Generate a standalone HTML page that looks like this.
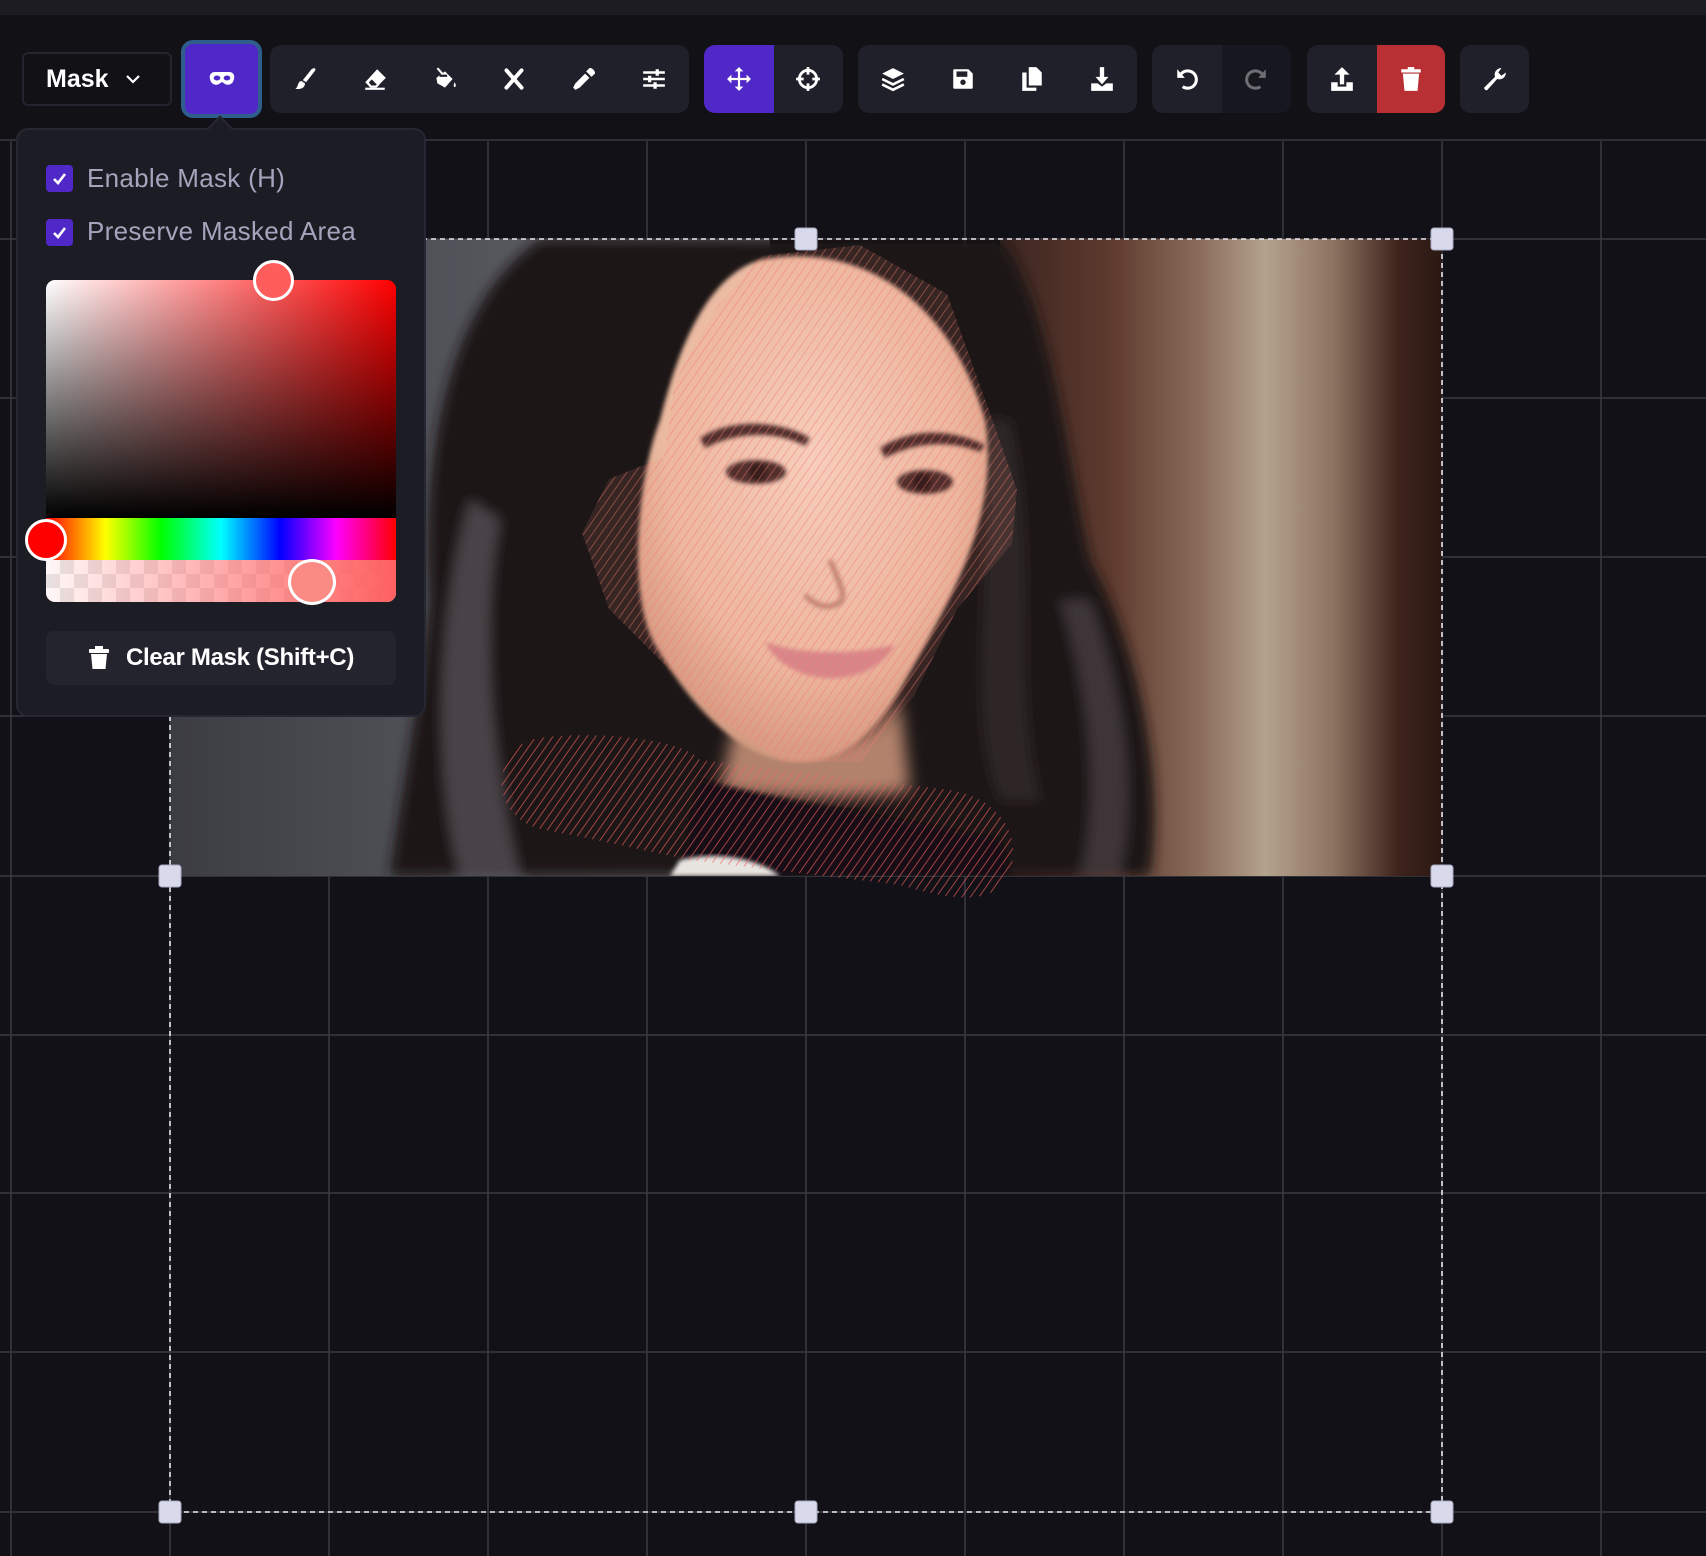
<!DOCTYPE html>
<html><head><meta charset="utf-8"><style>
*{box-sizing:border-box;margin:0;padding:0}
body{width:1706px;height:1556px;background:#111117;overflow:hidden;position:relative;font-family:"Liberation Sans",sans-serif}
.abs{position:absolute}
.grp{position:absolute;top:45px;height:68px;background:#1f2029;border-radius:11px;overflow:hidden;display:flex}
.btn{width:70px;height:68px;display:flex;align-items:center;justify-content:center}
.btn svg{width:26px;height:26px}
</style></head><body>
<svg class="abs" style="left:0;top:0" width="1706" height="1556" viewBox="0 0 1706 1556">
<defs>
<pattern id="hatch" patternUnits="userSpaceOnUse" width="7" height="7" patternTransform="rotate(35)">
<line x1="0" y1="0" x2="0" y2="7" stroke="rgba(238,95,95,0.8)" stroke-width="1.6"/>
</pattern>
<pattern id="hatch2" patternUnits="userSpaceOnUse" width="7" height="7" patternTransform="rotate(35)">
<line x1="0" y1="0" x2="0" y2="7" stroke="rgba(240,120,110,0.6)" stroke-width="1.5"/>
</pattern>
<linearGradient id="lg" x1="0" x2="1"><stop offset="0" stop-color="#3c3d43"/><stop offset="1" stop-color="#6b6c73"/></linearGradient>
<linearGradient id="rg" x1="0" x2="1">
<stop offset="0" stop-color="#3a2520"/><stop offset="0.25" stop-color="#5e3a2e"/><stop offset="0.45" stop-color="#8a6c5a"/><stop offset="0.6" stop-color="#b3a28c"/><stop offset="0.75" stop-color="#8f7563"/><stop offset="0.9" stop-color="#3e241c"/><stop offset="1" stop-color="#2a1812"/></linearGradient>
<radialGradient id="skin" cx="0.5" cy="0.4" r="0.6"><stop offset="0" stop-color="#f6d6c4"/><stop offset="0.7" stop-color="#ebbba2"/><stop offset="1" stop-color="#d29a80"/></radialGradient>
<filter id="bl"><feGaussianBlur stdDeviation="6"/></filter>
<filter id="bl2"><feGaussianBlur stdDeviation="2"/></filter>
<filter id="bl3"><feGaussianBlur stdDeviation="8"/></filter>
<clipPath id="ic"><rect x="170" y="239" width="1272" height="637"/></clipPath>
</defs>
<rect x="0" y="0" width="1706" height="15" fill="#1c1c22"/>
<rect x="0" y="15" width="1706" height="125" fill="#111116"/>
<rect x="0" y="139" width="1706" height="2" fill="#2e2e38"/>
<rect x="0" y="141" width="1706" height="1415" fill="#111117"/>
<g stroke="#3a3a44" stroke-width="1.5">
<line x1="11" y1="141" x2="11" y2="1556"/><line x1="170" y1="141" x2="170" y2="1556"/><line x1="329" y1="141" x2="329" y2="1556"/><line x1="488" y1="141" x2="488" y2="1556"/><line x1="647" y1="141" x2="647" y2="1556"/><line x1="806" y1="141" x2="806" y2="1556"/><line x1="965" y1="141" x2="965" y2="1556"/><line x1="1124" y1="141" x2="1124" y2="1556"/><line x1="1283" y1="141" x2="1283" y2="1556"/><line x1="1442" y1="141" x2="1442" y2="1556"/><line x1="1601" y1="141" x2="1601" y2="1556"/>
<line x1="0" y1="239" x2="1706" y2="239"/><line x1="0" y1="398" x2="1706" y2="398"/><line x1="0" y1="557" x2="1706" y2="557"/><line x1="0" y1="716" x2="1706" y2="716"/><line x1="0" y1="876" x2="1706" y2="876"/><line x1="0" y1="1035" x2="1706" y2="1035"/><line x1="0" y1="1193" x2="1706" y2="1193"/><line x1="0" y1="1352" x2="1706" y2="1352"/><line x1="0" y1="1512" x2="1706" y2="1512"/>
</g>
<g clip-path="url(#ic)">
<rect x="170" y="239" width="600" height="637" fill="url(#lg)"/>
<rect x="1000" y="239" width="442" height="637" fill="url(#rg)"/>
<g filter="url(#bl)">
<path d="M540 239 C450 300 420 450 430 600 C420 700 400 800 390 876 L1150 876 C1165 780 1140 650 1090 560 C1065 450 1050 300 1000 239 Z" fill="#1b1617"/>
<path d="M470 500 C440 600 430 760 460 876 L520 876 C490 760 480 620 500 520Z" fill="#4a4246"/>
<path d="M1060 600 C1090 700 1100 800 1080 876 L1120 876 C1140 780 1120 680 1090 600Z" fill="#3e3638"/>
<path d="M980 420 C1000 560 960 700 1000 800 L1040 800 C1010 680 1040 560 1010 420Z" fill="#2d2527"/>
</g>
<path d="M740 700 C780 760 860 760 900 700 L910 790 C860 800 780 800 720 790 Z" fill="#b2826c" filter="url(#bl3)"/>
<path d="M760 260 C860 240 950 300 985 420 C1000 520 950 600 900 690 C870 740 840 762 800 762 C740 762 690 705 655 645 C625 590 640 470 660 420 C680 340 710 275 760 260 Z" fill="url(#skin)" filter="url(#bl2)"/>
<g filter="url(#bl2)">
<path d="M700 438 C730 418 780 420 810 438 L805 446 C780 432 740 430 705 448Z" fill="#3a2420"/>
<path d="M880 448 C910 428 950 428 985 445 L980 452 C950 440 915 442 885 458Z" fill="#3a2420"/>
<ellipse cx="756" cy="472" rx="30" ry="12" fill="#3a2420"/><circle cx="758" cy="472" r="9" fill="#1a0e0c"/>
<ellipse cx="925" cy="482" rx="28" ry="12" fill="#3a2420"/><circle cx="922" cy="482" r="9" fill="#1a0e0c"/>
<path d="M830 560 C840 585 850 600 835 605 C820 610 810 600 805 595" stroke="#b47f6a" stroke-width="5" fill="none"/>
<path d="M765 642 C800 655 850 655 895 645 C870 690 790 690 765 642Z" fill="#d4848a"/>
</g>
<path d="M700 780 C780 800 900 820 1000 840 L1010 876 L680 876 Z" fill="#151012" filter="url(#bl2)"/>
<path d="M680 860 C720 850 760 860 780 876 L670 876Z" fill="#e8e4e0" filter="url(#bl2)"/>
</g>
<g>
<path d="M762 256 L860 245 L947 294 L990 413 L1017 490 L1012 544 L957 609 L914 696 L860 762 L783 762 L718 718 L653 653 L609 609 L582 533 L609 479 L664 457 L675 381 L718 305 Z" fill="rgba(255,150,130,0.12)"/>
<path d="M762 256 L860 245 L947 294 L990 413 L1017 490 L1012 544 L957 609 L914 696 L860 762 L783 762 L718 718 L653 653 L609 609 L582 533 L609 479 L664 457 L675 381 L718 305 Z" fill="url(#hatch2)"/>
<path d="M530 740 C570 730 680 735 700 760 L950 790 C1010 800 1025 850 1005 880 C990 905 950 900 900 885 L690 860 C640 850 600 840 545 830 C490 820 490 755 530 740 Z" fill="url(#hatch)"/>
</g>
<rect x="170" y="239" width="1272" height="1273" fill="none" stroke="#e8e8f0" stroke-width="1.6" stroke-dasharray="5 4"/>
<g fill="#d8d9ea" stroke="#a9abc3" stroke-width="1">
<rect x="159" y="228" width="22" height="22" rx="3"/><rect x="795" y="228" width="22" height="22" rx="3"/><rect x="1431" y="228" width="22" height="22" rx="3"/>
<rect x="159" y="865" width="22" height="22" rx="3"/><rect x="1431" y="865" width="22" height="22" rx="3"/>
<rect x="159" y="1501" width="22" height="22" rx="3"/><rect x="795" y="1501" width="22" height="22" rx="3"/><rect x="1431" y="1501" width="22" height="22" rx="3"/>
</g>
</svg>

<div class="abs" style="left:22px;top:52px;width:150px;height:54px;border:2px solid #24242e;border-radius:6px;background:#111116;color:#fff;font-weight:bold;font-size:25px;display:flex;align-items:center;padding-left:22px">Mask<svg style="margin-left:16px" width="16" height="10" viewBox="0 0 16 10"><path d="M2 2 L8 8 L14 2" stroke="#fff" stroke-width="2.2" fill="none"/></svg></div>
<div class="abs" style="left:181px;top:40px;width:81px;height:78px;border:4px solid #2f5e8c;border-radius:12px;background:#5128c8;display:flex;align-items:center;justify-content:center">
<svg width="26" height="16" viewBox="0 0 26 16"><path d="M6 1 H20 C24 1 26 4 25 8 C24 13 20 15 16 13 L13 11 L10 13 C6 15 2 13 1 8 C0 4 2 1 6 1Z" fill="#fff"/><ellipse cx="8" cy="7" rx="3.3" ry="2.5" fill="#5128c8"/><ellipse cx="18" cy="7" rx="3.3" ry="2.5" fill="#5128c8"/></svg></div>

<div class="grp" style="left:270px;width:419px">
<div class="btn"><svg viewBox="0 0 24 24"><path d="M20 2 C21 2 22 3 21.5 4 L13 15 L10 13 L18 3Z" fill="#fff"/><path d="M9 14 L12 16 C12 20 8 22 3 21 C5 20 5 18 6 16 C7 14 8 14 9 14Z" fill="#fff"/></svg></div>
<div class="btn"><svg viewBox="0 0 24 24"><path d="M14 3 L22 11 L14 19 L7 19 L3 15 Z" fill="#fff"/><path d="M9 11 L15 17 L13 19 L8 19 L5 15Z" fill="#1f2029"/><path d="M9 11 L15 17 L13 19 L8 19 L5 15Z" fill="none" stroke="#fff" stroke-width="2"/><rect x="3" y="20" width="18" height="2" fill="#fff"/></svg></div>
<div class="btn"><svg viewBox="0 0 24 24"><path d="M4 11 L12 5 L19 12 L12 20 L5 16Z" fill="#fff"/><path d="M5 2 L13 11" stroke="#fff" stroke-width="2"/><path d="M7 9 L14 9" stroke="#1f2029" stroke-width="2"/><path d="M21 15 C22 17 22.5 19 21 19.5 C19.5 19 20 17 21 15Z" fill="#fff"/></svg></div>
<div class="btn"><svg viewBox="0 0 24 24"><path d="M5 4 L19 20 M19 4 L5 20" stroke="#fff" stroke-width="3.6" stroke-linecap="round"/></svg></div>
<div class="btn"><svg viewBox="0 0 24 24"><path d="M17 2 C19 1 23 5 22 7 L19 10 L14 5Z" fill="#fff"/><path d="M13 7 L17 11 L8 20 L4 22 L2 20 L4 16Z" fill="#fff"/></svg></div>
<div class="btn"><svg viewBox="0 0 24 24"><path d="M2 6 H22 M2 12 H22 M2 18 H22" stroke="#fff" stroke-width="2.2"/><path d="M15 3 V9 M8 9 V15 M13 15 V21" stroke="#fff" stroke-width="3"/></svg></div>
</div>

<div class="grp" style="left:704px;width:139px">
<div class="btn" style="background:#5128c8"><svg viewBox="0 0 24 24"><path d="M12 1 L16 5 H13 V11 H19 V8 L23 12 L19 16 V13 H13 V19 H16 L12 23 L8 19 H11 V13 H5 V16 L1 12 L5 8 V11 H11 V5 H8Z" fill="#fff"/></svg></div>
<div class="btn"><svg viewBox="0 0 24 24"><circle cx="12" cy="12" r="8" stroke="#fff" stroke-width="2.6" fill="none"/><path d="M12 1 V8 M12 16 V23 M1 12 H8 M16 12 H23" stroke="#fff" stroke-width="2.6"/></svg></div>
</div>

<div class="grp" style="left:858px;width:279px">
<div class="btn"><svg viewBox="0 0 24 24"><path d="M12 2 L22 7 L12 12 L2 7Z" fill="#fff"/><path d="M2 12 L12 17 L22 12 M2 17 L12 22 L22 17" stroke="#fff" stroke-width="2.4" fill="none"/></svg></div>
<div class="btn"><svg viewBox="0 0 24 24"><path d="M4 3 H17 L21 7 V20 C21 21 20 21 20 21 H4 C3 21 3 20 3 20 V4 C3 3 4 3 4 3Z" fill="#fff"/><rect x="6" y="5" width="10" height="5" fill="#1f2029"/><circle cx="12" cy="15" r="2.5" fill="#1f2029"/></svg></div>
<div class="btn"><svg viewBox="0 0 24 24"><path d="M9 1 H16 L21 6 V18 H9Z" fill="#fff"/><path d="M3 6 H7 V20 H16 V23 H3Z" fill="#fff"/></svg></div>
<div class="btn"><svg viewBox="0 0 24 24"><path d="M10 1 H14 V10 H18 L12 17 L6 10 H10Z" fill="#fff"/><path d="M2 16 H8 L12 19 L16 16 H22 V23 H2Z" fill="#fff"/></svg></div>
</div>

<div class="grp" style="left:1152px;width:139px">
<div class="btn"><svg viewBox="0 0 24 24"><path d="M6 8 A8 8 0 1 1 8 19" stroke="#fff" stroke-width="2.8" fill="none"/><path d="M3 3 V11 H10Z" fill="#fff"/></svg></div>
<div class="btn" style="background:#17181f"><svg viewBox="0 0 24 24"><path d="M18 8 A8 8 0 1 0 16 19" stroke="#6e6e74" stroke-width="2.8" fill="none"/><path d="M21 3 V11 H14Z" fill="#6e6e74"/></svg></div>
</div>

<div class="grp" style="left:1307px;width:138px">
<div class="btn"><svg viewBox="0 0 24 24"><path d="M12 1 L19 8 H14 V17 H10 V8 H5Z" fill="#fff"/><path d="M2 15 H8 V19 H16 V15 H22 V23 H2Z" fill="#fff"/></svg></div>
<div class="btn" style="background:#b83034;width:69px"><svg viewBox="0 0 24 24"><rect x="3" y="3" width="18" height="3" fill="#fff"/><rect x="9" y="1" width="6" height="3" fill="#fff"/><path d="M4.5 7 H19.5 L18 23 H6Z" fill="#fff"/></svg></div>
</div>

<div class="grp" style="left:1460px;width:69px">
<div class="btn" style="width:69px"><svg viewBox="0 0 24 24"><path d="M22 6 A6 6 0 0 1 14 12 L5 22 C4 23 2 22 2 20 L12 10 A6 6 0 0 1 18 2 L15 6 L18 9Z" fill="#fff"/></svg></div>
</div>

<div class="abs" style="left:16px;top:128px;width:410px;height:589px;background:#1c1c24;border:2px solid #272733;border-radius:12px"></div>
<div class="abs" style="left:211px;top:119px;width:18px;height:18px;background:#1c1c24;border-left:2px solid #272733;border-top:2px solid #272733;transform:rotate(45deg)"></div>
<div class="abs" style="left:46px;top:165px;width:27px;height:27px;background:#5128c8;border-radius:4px"><svg width="27" height="27" viewBox="0 0 27 27"><path d="M8 14 L12 18 L19 9" stroke="#fff" stroke-width="2.6" fill="none"/></svg></div>
<div class="abs" style="left:87px;top:163px;color:#a4a4bd;font-size:26px;letter-spacing:0.3px">Enable Mask (H)</div>
<div class="abs" style="left:46px;top:219px;width:27px;height:27px;background:#5128c8;border-radius:4px"><svg width="27" height="27" viewBox="0 0 27 27"><path d="M8 14 L12 18 L19 9" stroke="#fff" stroke-width="2.6" fill="none"/></svg></div>
<div class="abs" style="left:87px;top:216px;color:#a4a4bd;font-size:26px;letter-spacing:0.3px">Preserve Masked Area</div>

<div class="abs" style="left:46px;top:280px;width:350px;height:322px;border-radius:9px;overflow:hidden">
<div style="height:238px;background:linear-gradient(to bottom,rgba(0,0,0,0),#000),linear-gradient(to right,#fff,#f00)"></div>
<div style="height:42px;background:linear-gradient(to right,#f00,#ff0 17%,#0f0 33%,#0ff 50%,#00f 67%,#f0f 83%,#f00)"></div>
<div style="height:42px;background:linear-gradient(to right,rgba(255,96,96,0.05),rgba(255,96,96,1)),repeating-conic-gradient(#e8e8e8 0 25%,#fff 0 50%) 0 0/28px 28px"></div>
</div>
<div class="abs" style="left:253px;top:260px;width:41px;height:41px;border-radius:50%;background:#ff5c5c;border:3px solid #fff"></div>
<div class="abs" style="left:25px;top:519px;width:42px;height:42px;border-radius:50%;background:#f00;border:3px solid #fff"></div>
<div class="abs" style="left:288px;top:559px;width:48px;height:46px;border-radius:50%;background:#fa8a84;border:3px solid #fff"></div>

<div class="abs" style="left:46px;top:631px;width:350px;height:54px;background:#23242e;border-radius:8px;display:flex;align-items:center;justify-content:center;color:#fff;font-weight:bold;font-size:24px;letter-spacing:-0.3px">
<svg width="22" height="24" viewBox="0 0 22 24" style="margin-right:16px"><rect x="1" y="3" width="20" height="4" rx="1" fill="#fff"/><rect x="7" y="0" width="8" height="4" fill="#fff"/><path d="M3 8 H19 L17.5 23 H4.5Z" fill="#fff"/></svg>Clear Mask (Shift+C)</div>
</body></html>
